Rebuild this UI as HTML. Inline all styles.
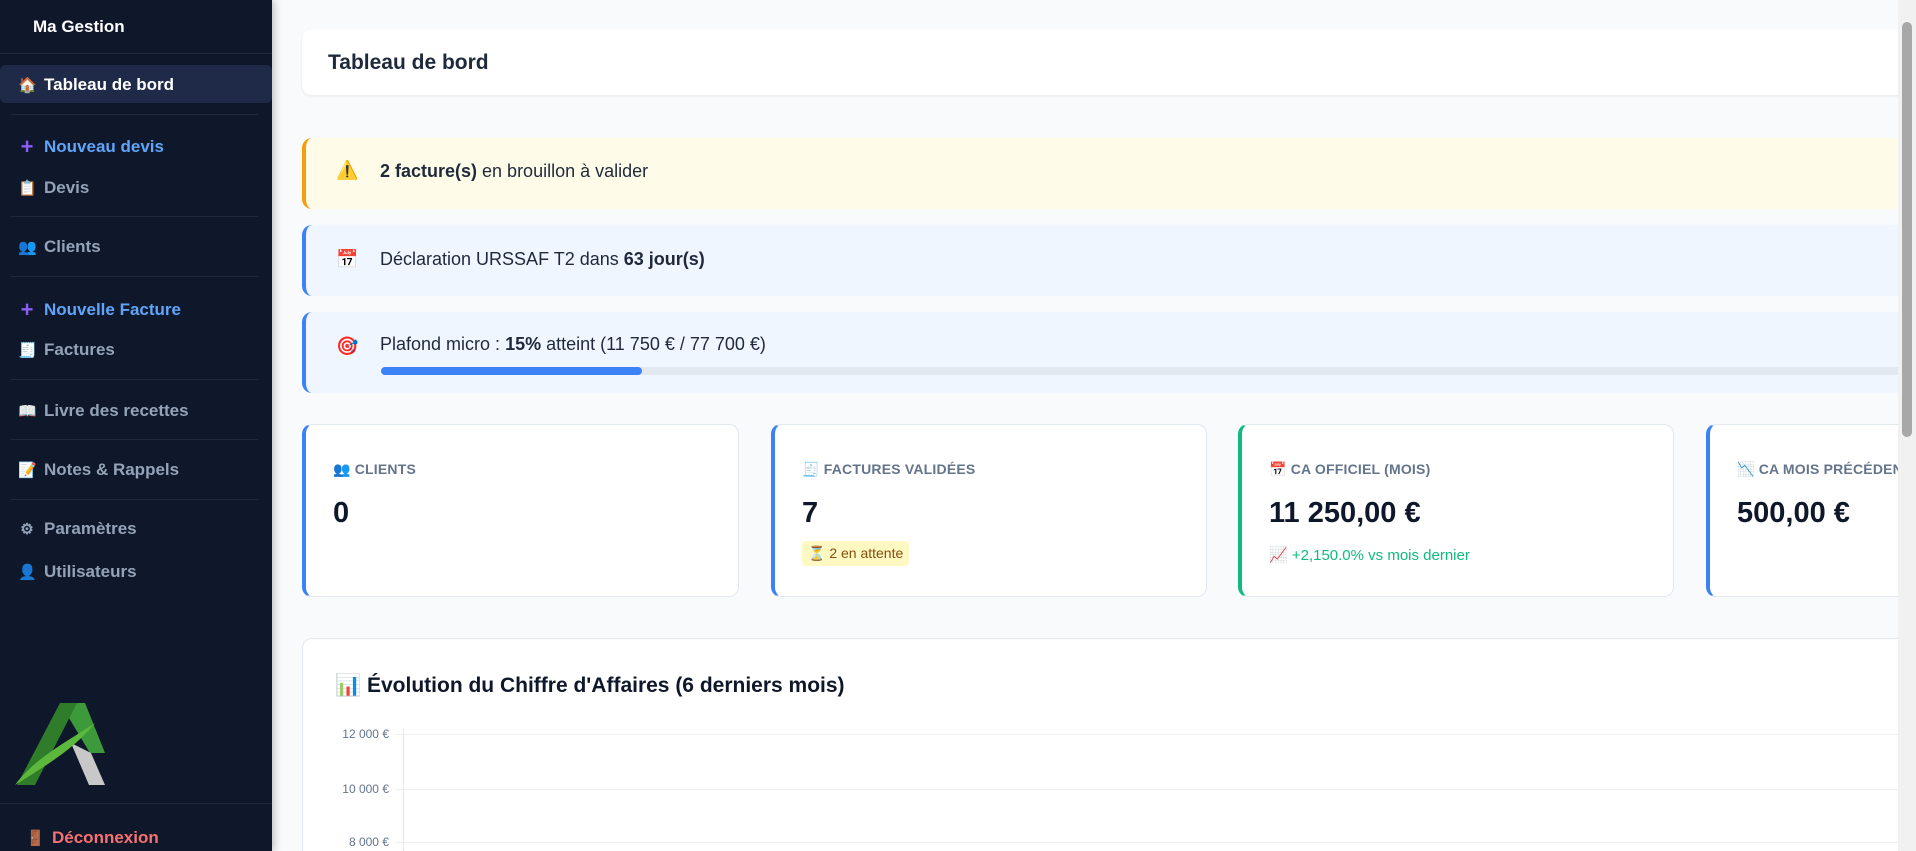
<!DOCTYPE html>
<html><head><meta charset="utf-8"><style>
*{box-sizing:border-box;margin:0;padding:0}
html,body{width:1916px;height:851px;overflow:hidden}
body{background:#f8fafc;font-family:"Liberation Sans",sans-serif;position:relative}
.sb{position:absolute;left:0;top:0;width:272px;height:851px;background:#0f172a;box-shadow:2px 0 8px rgba(0,0,0,.25)}
.sb .brand{position:absolute;left:33px;top:17px;color:#fff;font-weight:bold;font-size:17px}
.sb .hr{position:absolute;left:11px;right:14px;height:1px;background:#1e293b}
.sb .it{position:absolute;left:18px;font-size:17px;font-weight:bold;color:#94a3b8;display:flex;align-items:center;gap:8px}
.sb .it i{font-style:normal;width:18px;display:inline-block;text-align:center;font-size:15px}
.sb .blue{color:#60a5fa}
.act{position:absolute;left:0;top:65px;width:272px;height:38px;background:#1e2a48;border-radius:6px}
.main{position:absolute;left:272px;top:0;right:18px;height:851px;overflow:hidden}
.card{position:absolute;background:#fff;border:1px solid #e2e8f0;border-radius:10px}
.alert{position:absolute;left:30px;width:1700px;border-radius:10px;font-size:18px;color:#1e293b}
.scroll{position:absolute;right:0;top:0;width:18px;height:851px;background:#f1f1f1}
.thumb{position:absolute;right:4px;top:22px;width:10px;height:415px;background:#a8a8a8;border-radius:6px}
.lbl{font-size:14px;font-weight:bold;color:#64748b;position:absolute;left:27px;top:36px;letter-spacing:.2px}
.val{font-size:29px;font-weight:bold;color:#0f172a;position:absolute;left:27px;top:72px}
.ylab{position:absolute;font-size:12px;color:#64748b;text-align:right;width:90px}
</style></head><body>
<div class="sb">
<div class="brand">Ma Gestion</div>
<div class="hr" style="top:53px;left:0;right:0"></div>
<div class="act"></div>
<div class="it" style="top:75px;color:#fff"><i>🏠</i>Tableau de bord</div>
<div class="hr" style="top:114px"></div>
<div class="it blue" style="top:134px"><i style="color:#8b5cf6;font-size:22px">+</i>Nouveau devis</div>
<div class="it" style="top:178px"><i>📋</i>Devis</div>
<div class="hr" style="top:216px"></div>
<div class="it" style="top:237px"><i>👥</i>Clients</div>
<div class="hr" style="top:276px"></div>
<div class="it blue" style="top:297px"><i style="color:#8b5cf6;font-size:22px">+</i>Nouvelle Facture</div>
<div class="it" style="top:340px"><i>🧾</i>Factures</div>
<div class="hr" style="top:379px"></div>
<div class="it" style="top:401px"><i>📖</i>Livre des recettes</div>
<div class="hr" style="top:439px"></div>
<div class="it" style="top:460px"><i>📝</i>Notes &amp; Rappels</div>
<div class="hr" style="top:499px"></div>
<div class="it" style="top:519px"><i>⚙</i>Paramètres</div>
<div class="it" style="top:562px"><i>👤</i>Utilisateurs</div>
<svg style="position:absolute;left:15px;top:703px" width="90" height="85" viewBox="0 0 90 85">
<path d="M45 0 L70 0 L90 50 L75 50 Z" fill="#3d9a3a"/>
<path d="M56 40 L76 50 L90 82 L74 82 Z" fill="#c8c8c8"/>
<path d="M45 0 L62 0 L20 82 L2 82 Z" fill="#2f7d2b"/>
<path d="M0 82 C20 55 50 40 80 20 C60 45 35 60 0 82Z" fill="#5cb83c"/>
</svg>
<div class="hr" style="top:803px;left:0;right:0"></div>
<div class="it" style="top:828px;left:26px;color:#f87171"><i>🚪</i>Déconnexion</div>
</div>
<div class="main">
<div class="card" style="left:30px;top:29px;width:1700px;height:66px;border:none;box-shadow:0 1px 3px rgba(0,0,0,.08)">
<div style="position:absolute;left:26px;top:22px;font-size:21px;font-weight:bold;color:#1e293b">Tableau de bord</div></div>
<div class="alert" style="top:138px;height:71px;background:#fefce8;border-left:4px solid #f59e0b">
<span style="position:absolute;left:30px;top:22px">⚠️</span><span style="position:absolute;left:74px;top:23px"><b>2 facture(s)</b> en brouillon à valider</span></div>
<div class="alert" style="top:225px;height:71px;background:#eff6ff;border-left:4px solid #3b82f6">
<span style="position:absolute;left:30px;top:24px">📅</span><span style="position:absolute;left:74px;top:24px">Déclaration URSSAF T2 dans <b>63 jour(s)</b></span></div>
<div class="alert" style="top:312px;height:81px;background:#eff6ff;border-left:4px solid #3b82f6">
<span style="position:absolute;left:30px;top:24px">🎯</span><span style="position:absolute;left:74px;top:22px">Plafond micro : <b>15%</b> atteint (11 750 € / 77 700 €)</span>
<div style="position:absolute;left:75px;top:55px;width:1600px;height:8px;background:#e2e8f0;border-radius:4px"><div style="width:261px;height:8px;background:#3b82f6;border-radius:4px"></div></div></div>

<div class="card" style="left:30px;top:424px;width:437px;height:173px;border-left:4px solid #3b82f6">
<div class="lbl">👥 CLIENTS</div><div class="val">0</div></div>
<div class="card" style="left:499px;top:424px;width:436px;height:173px;border-left:4px solid #3b82f6">
<div class="lbl">🧾 FACTURES VALIDÉES</div><div class="val">7</div>
<div style="position:absolute;left:27px;top:116px;background:#fef9c3;color:#854d0e;font-size:14px;padding:4px 6px;border-radius:4px">⏳ 2 en attente</div></div>
<div class="card" style="left:966px;top:424px;width:436px;height:173px;border-left:4px solid #10b981">
<div class="lbl">📅 CA OFFICIEL (MOIS)</div><div class="val">11 250,00 €</div>
<div style="position:absolute;left:27px;top:121px;color:#10b981;font-size:15px">📈 +2,150.0% vs mois dernier</div></div>
<div class="card" style="left:1434px;top:424px;width:436px;height:173px;border-left:4px solid #3b82f6">
<div class="lbl">📉 CA MOIS PRÉCÉDENT</div><div class="val">500,00 €</div></div>

<div class="card" style="left:30px;top:638px;width:1700px;height:213px;border-bottom:none;border-radius:10px 10px 0 0">
<div style="position:absolute;left:32px;top:35px;font-size:21px;font-weight:bold;color:#0f172a">📊 Évolution du Chiffre d'Affaires (6 derniers mois)</div>
<div class="ylab" style="top:88px;left:-4px">12 000 €</div>
<div class="ylab" style="top:143px;left:-4px">10 000 €</div>
<div class="ylab" style="top:196px;left:-4px">8 000 €</div>
<div style="position:absolute;left:92px;top:95px;width:1600px;height:1px;background:#eef0f3"></div>
<div style="position:absolute;left:92px;top:150px;width:1600px;height:1px;background:#eef0f3"></div>
<div style="position:absolute;left:92px;top:203px;width:1600px;height:1px;background:#eef0f3"></div>
<div style="position:absolute;left:100px;top:90px;width:1px;height:123px;background:#e5e7eb"></div>
</div>
</div>
<div class="scroll"><div class="thumb"></div></div>
</body></html>
